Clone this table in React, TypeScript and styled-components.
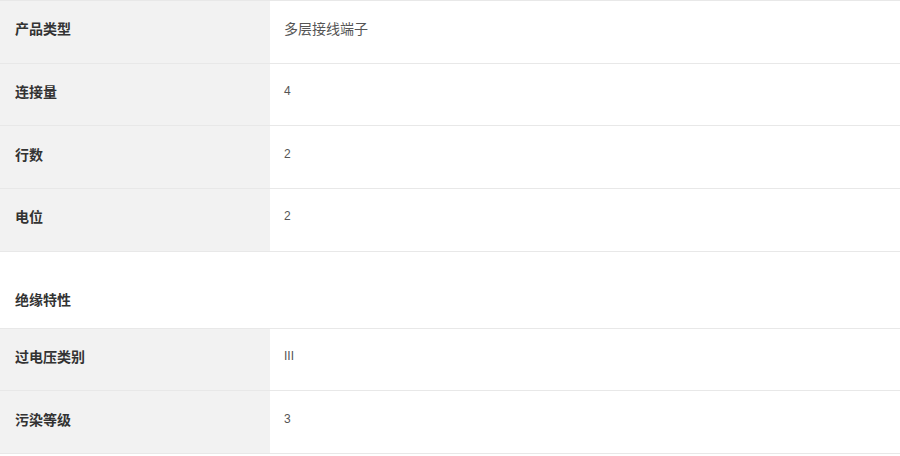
import React from "react";
import styled, { createGlobalStyle } from "styled-components";

const GlobalStyle = createGlobalStyle`
  html, body {
    margin: 0;
    padding: 0;
    background: #ffffff;
  }
  body {
    font-family: "Liberation Sans", "Noto Sans CJK SC", sans-serif;
  }
`;

const Table = styled.div`
  width: 900px;
  border-top: 1px solid #e8e8e8;
`;

const Row = styled.div`
  display: grid;
  grid-template-columns: 270px 1fr;
  height: 62.7px;
  box-sizing: border-box;
  border-bottom: 1px solid #e8e8e8;
`;

const Label = styled.div`
  display: flex;
  align-items: center;
  padding: 0 0 7px 15px;
  background: #f2f2f2;
  color: #333333;
  font-size: 14px;
  font-weight: bold;
`;

const Value = styled.div<{ $cjk?: boolean }>`
  display: flex;
  align-items: center;
  padding: 0 0 7px 14px;
  color: #555555;
  font-size: ${(p) => (p.$cjk ? "14px" : "12px")};
`;

const Section = styled.div`
  display: flex;
  align-items: center;
  height: 77px;
  box-sizing: border-box;
  padding-left: 15px;
  padding-top: 18px;
  border-bottom: 1px solid #e8e8e8;
  color: #333333;
  font-size: 14px;
  font-weight: bold;
`;

interface Spec {
  label: string;
  value: string;
}

const general: Spec[] = [
  { label: "产品类型", value: "多层接线端子" },
  { label: "连接量", value: "4" },
  { label: "行数", value: "2" },
  { label: "电位", value: "2" },
];

const insulation: Spec[] = [
  { label: "过电压类别", value: "III" },
  { label: "污染等级", value: "3" },
];

const SpecRow: React.FC<Spec> = ({ label, value }) => (
  <Row>
    <Label>{label}</Label>
    <Value $cjk={/[^\x00-\x7f]/.test(value)}>{value}</Value>
  </Row>
);

const App: React.FC = () => (
  <>
    <GlobalStyle />
    <Table>
      {general.map((s) => (
        <SpecRow key={s.label} {...s} />
      ))}
      <Section>绝缘特性</Section>
      {insulation.map((s) => (
        <SpecRow key={s.label} {...s} />
      ))}
    </Table>
  </>
);

export default App;
